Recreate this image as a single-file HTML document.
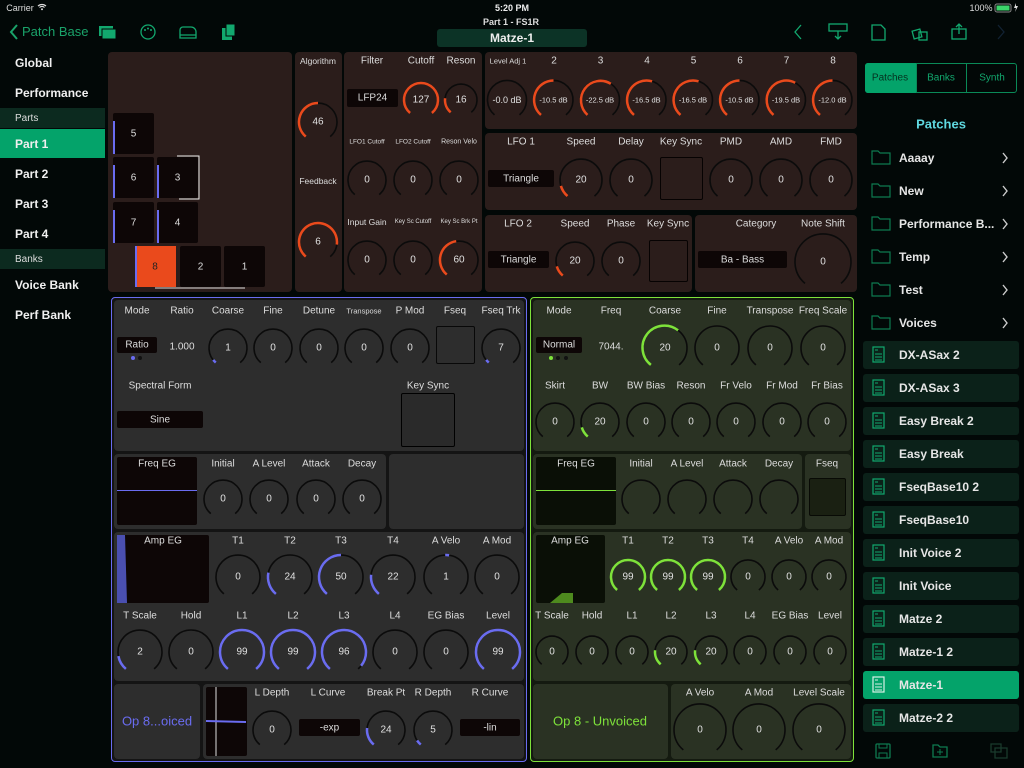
<!DOCTYPE html>
<html><head><meta charset="utf-8">
<style>
*{box-sizing:border-box;margin:0;padding:0}
body{width:1024px;height:768px;background:#020807;font-family:"Liberation Sans",sans-serif;color:#e8e8e8;position:relative;overflow:hidden}
.a{position:absolute}
#s{z-index:2}
.t{position:absolute;transform:translate(-50%,-50%);white-space:nowrap;font-size:10px;color:#ddd;z-index:3}
.p{position:absolute;border-radius:4px}
.br{background:#2b1d1b}
.gy{background:#2d2d2d}
.gn{background:#2a3223}
.box{position:absolute;background:#0d0606;border-radius:2px}
.sb{position:absolute;left:15px;font-size:12px;font-weight:bold;color:#f0f0f0}
.row{position:absolute;left:863px;width:156px;height:28px;border-radius:3px;background:#0b2119}
.rt{position:absolute;left:36px;top:7px;font-size:12px;font-weight:bold;color:#e6e6e6}
.fr{position:absolute;left:899px;font-size:12px;font-weight:bold;color:#e6e6e6}
</style></head><body>
<div id="d"></div>
<svg id="s" class="a" style="left:0;top:0" width="1024" height="768"></svg>
<script>
const S=document.getElementById('s'),D=document.getElementById('d');
function el(h){D.insertAdjacentHTML('beforeend',h)}
function sv(h){S.insertAdjacentHTML('beforeend',h)}
function t(x,y,s,sz,c,w){el(`<div class="t" style="left:${x}px;top:${y}px;font-size:${sz||10}px;${c?'color:'+c+';':''}${w?'font-weight:bold;':''}">${s}</div>`)}
function pt(cx,cy,r,a){a=a*Math.PI/180;return [cx+r*Math.sin(a),cy-r*Math.cos(a)]}
function arc(cx,cy,r,a0,a1,col,w){const p0=pt(cx,cy,r,a0),p1=pt(cx,cy,r,a1);const L=(a1-a0)>180?1:0;return `<path d="M${p0[0].toFixed(1)} ${p0[1].toFixed(1)}A${r} ${r} 0 ${L} 1 ${p1[0].toFixed(1)} ${p1[1].toFixed(1)}" fill="none" stroke="${col}" stroke-width="${w}"/>`}
function k(cx,cy,r,f,col,v,sz){let h=arc(cx,cy,r,-140,140,'#0b0b0b',1.6);if(f>0)h+=arc(cx,cy,r,-140,-140+280*f,col,2.5);sv(h);if(v!==undefined&&v!=='')t(cx,cy,v,sz||10,'#e0e0e0')}
function P(x,y,w,h,c){el(`<div class="p ${c}" style="left:${x}px;top:${y}px;width:${w}px;height:${h}px"></div>`)}
function B(x,y,w,h,s,extra){el(`<div class="box" style="left:${x}px;top:${y}px;width:${w}px;height:${h}px;${extra||''}"></div>`);if(s)t(x+w/2,y+h/2,s,10)}
const R='#ea4a1c',BL='#6a6cf0',G='#7ee23a';
t(20,8,'Carrier',9,'#ddd');
sv('<path d="M38 6a6 6 0 0 1 8 0M39.5 7.5a3.5 3.5 0 0 1 5 0" stroke="#ddd" fill="none" stroke-width="1.2"/><circle cx="42" cy="9.3" r="1" fill="#ddd"/>');
t(512,8,'5:20 PM',9,'#eee',1);
t(981,8,'100%',9,'#ddd');
sv('<rect x="995" y="4" width="16" height="8" rx="2" fill="none" stroke="#888"/><rect x="996.5" y="5.5" width="13" height="5" fill="#3bd46a"/><path d="M1016 3l-2 5h2l-1 4 3-6h-2z" fill="#ddd"/>');
sv('<path d="M17 25l-6 7 6 7" stroke="#1aa36a" stroke-width="2" fill="none"/>');
el('<div class="a" style="left:22px;top:24px;font-size:13px;color:#1aa36a">Patch Base</div>');
sv('<rect x="99" y="26" width="14" height="10" fill="#12a86e"/><rect x="102" y="29" width="14" height="10" fill="#12a86e" stroke="#020807"/>');
sv('<circle cx="148" cy="32" r="7" fill="none" stroke="#12a86e" stroke-width="1.3"/><circle cx="145" cy="30" r="1" fill="#12a86e"/><circle cx="148" cy="28.5" r="1" fill="#12a86e"/><circle cx="151" cy="30" r="1" fill="#12a86e"/>');
sv('<path d="M180 38v-8a3 3 0 0 1 3-3h8a5 5 0 0 1 5 5v6zM180 35h16" fill="none" stroke="#12a86e" stroke-width="1.3"/>');
sv('<rect x="222" y="28" width="10" height="12" fill="#12a86e"/><rect x="226" y="24" width="9" height="12" fill="#12a86e" stroke="#020807"/>');
t(511,22,'Part 1 - FS1R',9,'#ddd',1);
el('<div class="a" style="left:437px;top:29px;width:150px;height:18px;background:#0c3326;border-radius:3px"></div>');
t(512,38,'Matze-1',12,'#eee',1);
sv('<path d="M801 25l-6 7 6 7" stroke="#12a86e" stroke-width="1.3" fill="none"/><path d="M998 25l6 7-6 7" stroke="#123" stroke-width="1.3" fill="none"/>');
sv('<rect x="829" y="24" width="18" height="7" fill="none" stroke="#12a86e" stroke-width="1.3"/><path d="M838 31v8M835 36l3 3 3-3" stroke="#12a86e" fill="none" stroke-width="1.3"/>');
sv('<path d="M872 25h9l4 4v11h-13z" fill="none" stroke="#12a86e" stroke-width="1.3"/>');
sv('<rect x="913" y="30" width="8" height="8" fill="none" stroke="#12a86e" stroke-width="1.3" transform="rotate(-15 917 34)"/><rect x="919" y="32" width="8" height="8" fill="none" stroke="#12a86e" stroke-width="1.3"/>');
sv('<rect x="952" y="29" width="14" height="10" fill="none" stroke="#12a86e" stroke-width="1.3"/><path d="M959 34v-10M956 27l3-3 3 3" stroke="#12a86e" fill="none" stroke-width="1.3"/>');
[['Global',56],['Performance',86],['Part 2',167],['Part 3',197],['Part 4',227],['Voice Bank',278],['Perf Bank',308]].forEach(a=>el(`<div class="sb" style="top:${a[1]}px">${a[0]}</div>`));
el('<div class="a" style="left:0;top:108px;width:105px;height:20px;background:#0c2a1f"></div><div class="a" style="left:15px;top:113px;font-size:10px;color:#ddd">Parts</div>');
el('<div class="a" style="left:0;top:129px;width:105px;height:29px;background:#04a36a"></div><div class="sb" style="top:137px">Part 1</div>');
el('<div class="a" style="left:0;top:249px;width:105px;height:20px;background:#0c2a1f"></div><div class="a" style="left:15px;top:254px;font-size:10px;color:#ddd">Banks</div>');
P(108,52,184,240,'br');
[[113,113,'5',1],[113,157,'6',1],[157,157,'3',1],[113,202,'7',1],[157,202,'4',1],[180,246,'2',0],[224,246,'1',0]].forEach(b=>{B(b[0],b[1],41,41,b[2]);if(b[3])el(`<div class="a" style="left:${b[0]}px;top:${b[1]+8}px;width:2px;height:33px;background:${BL}"></div>`)});
el(`<div class="a" style="left:135px;top:246px;width:41px;height:41px;background:${R}"></div><div class="a" style="left:135px;top:246px;width:2px;height:41px;background:${BL}"></div>`);t(155,267,'8',10,'#222');
sv('<path d="M177 156h22v43h-20" stroke="#eee" fill="none" stroke-width="1"/><path d="M155 288h90" stroke="#ddd" stroke-width="1"/>');
P(295,52,47,240,'br');
t(318,61,'Algorithm',8.5);k(318,122,19,0.5,R,'46',10);t(318,181,'Feedback',8.5);k(318,242,19,0.85,R,'6',10);
P(344,52,138,240,'br');
t(372,61,'Filter');t(421,61,'Cutoff');t(461,61,'Reson');
B(347,89,51,18,'LFP24');k(421,100,17,1,R,'127');k(461,100,16,0.2,R,'16');
t(367,142,'LFO1 Cutoff',6.5);t(413,142,'LFO2 Cutoff',6.5);t(459,142,'Reson Velo',7);
k(367,180,19,0,R,'0');k(413,180,19,0,R,'0');k(459,180,19,0,R,'0');
t(367,222,'Input Gain',8.5);t(413,222,'Key Sc Cutoff',6);t(459,222,'Key Sc Brk Pt',6);
k(367,260,19,0,R,'0');k(413,260,19,0,R,'0');k(459,260,19,0.47,R,'60');
P(485,52,372,77,'br');
t(508,61,'Level Adj 1',7.5);['2','3','4','5','6','7','8'].forEach((s,i)=>t(554+i*46.5,61,s));
[['-0.0 dB',0],['-10.5 dB',.5],['-22.5 dB',.62],['-16.5 dB',.56],['-16.5 dB',.56],['-10.5 dB',.5],['-19.5 dB',.6],['-12.0 dB',.5]].forEach((a,i)=>k(507+i*46.5,100,19.5,a[1],R,a[0],i?7.5:9));
P(485,133,372,77,'br');
t(521,142,'LFO 1');t(581,142,'Speed');t(631,142,'Delay');t(681,142,'Key Sync');t(731,142,'PMD');t(781,142,'AMD');t(831,142,'FMD');
B(488,170,66,17,'Triangle');k(581,180,21,0.12,R,'20');k(631,180,21,0,R,'0');
B(660,157,43,43,'','border:1px solid #060202;background:#2b1d1b');
k(731,180,21,0,R,'0');k(781,180,21,0,R,'0');k(831,180,21,0,R,'0');
P(485,215,207,77,'br');
t(518,224,'LFO 2');t(575,224,'Speed');t(621,224,'Phase');t(668,224,'Key Sync');
B(488,251,61,17,'Triangle');k(575,261,19,0.12,R,'20');k(621,261,19,0,R,'0');B(649,240,39,42,'','border:1px solid #060202;background:#2b1d1b');
P(695,215,162,77,'br');
t(756,224,'Category');t(823,224,'Note Shift');B(698,251,89,17,'Ba - Bass');k(823,262,28,0,R,'0');
el(`<div class="a" style="left:111px;top:297px;width:416px;height:465px;border:1px solid ${BL};border-radius:4px;background:#141414"></div>`);
P(114,300,410,151,'gy');
[['Mode',137],['Ratio',182],['Coarse',228],['Fine',273],['Detune',319],['P Mod',410],['Fseq',455],['Fseq Trk',501]].forEach(a=>t(a[1],311,a[0]));t(364,311,'Transpose',7.5);
B(117,337,40,16,'Ratio');sv(`<circle cx="133" cy="358" r="2" fill="${BL}"/><circle cx="140" cy="358" r="2" fill="#111"/>`);
t(182,347,'1.000');k(228,348,19,0.04,BL,'1');k(273,348,19,0,BL,'0');k(319,348,19,0,BL,'0');k(364,348,19,0,BL,'0');k(410,348,19,0,BL,'0');
B(436,326,39,38,'','border:1px solid #080808;background:#2d2d2d');k(501,348,19,0.04,BL,'7');
t(160,386,'Spectral Form');B(117,411,86,17,'Sine');t(428,386,'Key Sync');B(401,393,54,54,'','border:1px solid #000;background:#2a2a2a');
P(114,454,272,75,'gy');P(389,454,135,75,'gy');
B(117,457,80,68,'');el(`<div class="a" style="left:117px;top:490px;width:80px;height:1px;background:${BL}"></div>`);t(157,464,'Freq EG');
[['Initial',223],['A Level',269],['Attack',316],['Decay',362]].forEach(a=>{t(a[1],464,a[0]);k(a[1],499,19,0,BL,'0')});
P(114,532,410,149,'gy');
B(117,535,92,68,'');sv(`<path d="M117 535h8l2 68h-10z" fill="#4a4fb0"/>`);t(163,541,'Amp EG');
[['T1',238,0],['T2',290,.22],['T3',341,.5],['T4',393,.2],['A Velo',446,0],['A Mod',497,0]].forEach((a,i)=>{t(a[1],541,a[0]);k(a[1],577,22,a[2],BL,['0','24','50','22','1','0'][i])});
sv(arc(446,577,22,-2,8,BL,2.5));
[['T Scale',140,.14,'2'],['Hold',191,0,'0'],['L1',242,1,'99'],['L2',293,1,'99'],['L3',344,.96,'96'],['L4',395,0,'0'],['EG Bias',446,0,'0'],['Level',498,1,'99']].forEach(a=>{t(a[1],616,a[0]);k(a[1],652,22,a[2],BL,a[3])});
P(114,684,86,75,'gy');t(157,721,'Op 8...oiced',13,BL);
P(203,684,321,75,'gy');B(206,687,41,69,'');sv(`<path d="M216 687v69" stroke="#ddd" stroke-width="1"/><path d="M206 721l40 1" stroke="${BL}" stroke-width="2"/>`);
t(272,693,'L Depth');t(328,693,'L Curve');t(386,693,'Break Pt');t(433,693,'R Depth');t(490,693,'R Curve');
k(272,730,19,0,BL,'0');B(299,719,61,17,'-exp');k(386,730,19,0.2,BL,'24');k(433,730,19,0.06,BL,'5');B(460,719,60,17,'-lin');
el(`<div class="a" style="left:530px;top:297px;width:324px;height:465px;border:1px solid ${G};border-radius:4px;background:#141a10"></div>`);
P(533,300,318,151,'gn');
[['Mode',559],['Freq',611],['Coarse',665],['Fine',717],['Transpose',770],['Freq Scale',823]].forEach(a=>t(a[1],311,a[0]));
B(536,337,46,16,'Normal');sv(`<circle cx="551" cy="358" r="2" fill="${G}"/><circle cx="558" cy="358" r="2" fill="#111"/><circle cx="566" cy="358" r="2" fill="#111"/>`);
t(611,347,'7044.');k(665,348,22,0.63,G,'20');k(717,348,22,0,G,'0');k(770,348,22,0,G,'0');k(823,348,22,0,G,'0');
[['Skirt',555,0,'0'],['BW',600,.12,'20'],['BW Bias',646,0,'0'],['Reson',691,0,'0'],['Fr Velo',736,0,'0'],['Fr Mod',782,0,'0'],['Fr Bias',827,0,'0']].forEach(a=>{t(a[1],386,a[0]);k(a[1],422,19,a[2],G,a[3])});
P(533,454,269,75,'gn');P(805,454,46,75,'gn');
B(536,457,80,68,'','background:#0a0f06');el(`<div class="a" style="left:536px;top:490px;width:80px;height:1px;background:${G}"></div>`);t(576,464,'Freq EG');
[['Initial',641],['A Level',687],['Attack',733],['Decay',779]].forEach(a=>{t(a[1],464,a[0]);k(a[1],499,19,0,G)});
t(827,464,'Fseq');B(809,478,37,38,'','background:#1a2012;border:1px solid #080a05');
P(533,532,318,149,'gn');
B(536,535,69,68,'','background:#0a0f06');sv(`<path d="M550 603l12-10h11v10z" fill="#4e8a1e"/>`);t(570,541,'Amp EG');
[['T1',628,1,'99'],['T2',668,1,'99'],['T3',708,1,'99'],['T4',748,0,'0'],['A Velo',789,0,'0'],['A Mod',829,0,'0']].forEach(a=>{t(a[1],541,a[0]);k(a[1],577,17,a[2],G,a[3])});
[['T Scale',552,0,'0'],['Hold',592,0,'0'],['L1',632,0,'0'],['L2',671,.2,'20'],['L3',711,.2,'20'],['L4',750,0,'0'],['EG Bias',790,0,'0'],['Level',830,0,'0']].forEach(a=>{t(a[1],616,a[0]);k(a[1],652,16,a[2],G,a[3])});
P(533,684,135,75,'gn');t(600,721,'Op 8 - Unvoiced',13,G);
P(671,684,180,75,'gn');
[['A Velo',700],['A Mod',759],['Level Scale',819]].forEach(a=>{t(a[1],693,a[0]);k(a[1],730,26,0,G,'0')});
el('<div class="a" style="left:865px;top:63px;width:152px;height:30px;border:1px solid #0a8a58;border-radius:3px"></div><div class="a" style="left:865px;top:63px;width:51px;height:30px;background:#04a36a;border-radius:3px 0 0 3px"></div><div class="a" style="left:916px;top:63px;width:1px;height:30px;background:#0a8a58"></div><div class="a" style="left:966px;top:63px;width:1px;height:30px;background:#0a8a58"></div>');
t(890,78,'Patches',10,'#06301f');t(941,78,'Banks',10,'#12a86e');t(992,78,'Synth',10,'#12a86e');
t(941,124,'Patches',13,'#5fd8e0',1);
['Aaaay','New','Performance B...','Temp','Test','Voices'].forEach((s,i)=>{const y=158+i*33;el(`<div class="fr" style="top:${y-7}px">${s}</div>`);sv(`<path d="M872 ${y-7}h6l2 2h10v11h-18z" fill="none" stroke="#0e7a50" stroke-width="1.2"/><path d="M1003 ${y-5}l4 5-4 5" fill="none" stroke="#ccc" stroke-width="1.4"/>`)});
['DX-ASax 2','DX-ASax 3','Easy Break 2','Easy Break','FseqBase10 2','FseqBase10','Init Voice 2','Init Voice','Matze 2','Matze-1 2','Matze-1','Matze-2 2'].forEach((s,i)=>{const y=341+i*33,sel=s==='Matze-1';el(`<div class="row" style="top:${y}px;${sel?'background:#04a36a':''}"><div class="rt">${s}</div></div>`);const c=sel?'#d8f0e6':'#12a86e';sv(`<rect x="873" y="${y+6}" width="11" height="15" fill="none" stroke="${c}" stroke-width="1.2"/><path d="M875 ${y+13}h7M875 ${y+16}h7M875 ${y+19}h7M875 ${y+9}h3" stroke="${c}"/>`)});
sv('<rect x="876" y="744" width="14" height="14" rx="1" fill="none" stroke="#0e7a50" stroke-width="1.3"/><path d="M879 744v4h8v-4M879 758v-5h8v5" stroke="#0e7a50" fill="none"/>');
sv('<path d="M933 745h5l2 2h7v10h-14z" fill="none" stroke="#0e7a50" stroke-width="1.3"/><path d="M940 749v6M937 752h6" stroke="#0e7a50"/>');
sv('<path d="M991 744h10v8h-10zM995 748h12v10h-12z" fill="none" stroke="#1a3a2c" stroke-width="1.3"/>');
</script>
</body></html>
